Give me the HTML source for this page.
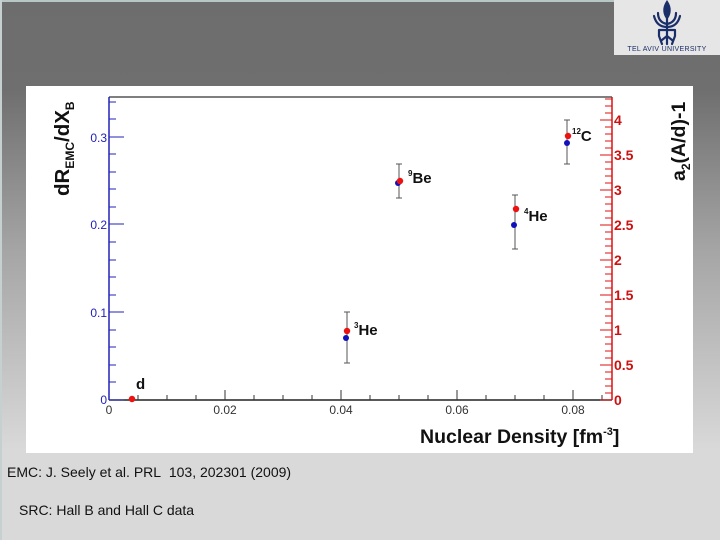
<!DOCTYPE html>
<html><head><meta charset="utf-8"><style>
html,body{margin:0;padding:0}
body{width:720px;height:540px;position:relative;overflow:hidden;background:linear-gradient(#6d6d6d 0px,#6f6f6f 90px,#a5a5a5 250px,#d9d9d9 450px,#d9d9d9 540px);font-family:"Liberation Sans",sans-serif}
.edge{position:absolute;left:0;top:0;width:720px;height:2px;background:#b9c6c6}
.edgel{position:absolute;left:0;top:0;width:2px;height:540px;background:#c6d0d0}
.logo{position:absolute;left:614px;top:0;width:106px;height:55px;background:#e6e6e6}
.plot{position:absolute;left:26px;top:86px;width:667px;height:367px;background:#fff}
.txt{position:absolute;font-size:14px;color:#111}
</style></head><body>
<div class="edge"></div><div class="edgel"></div>
<div class="logo">
<svg width="106" height="55" viewBox="0 0 106 55">
<g fill="none" stroke="#1a2e6a" stroke-width="2.2" stroke-linecap="round">
<path d="M53 2 C49 8 50 14 53 18 C56 14 57 8 53 2Z" fill="#1a2e6a"/>
<path d="M44 13 C44 20 48 23 53 24 C58 23 62 20 62 13"/>
<path d="M40 16 C42 24 47 27 53 27 C59 27 64 24 66 16"/>
<path d="M53 18 V44"/>
<path d="M45 30 H61 M45 30 V36 M61 30 V36 M45 36 L48 44 M61 36 L58 44 M53 36 L48 40 M53 36 L58 40"/>
</g>
<text x="53" y="51" text-anchor="middle" font-family="Liberation Sans" font-size="7" fill="#1a2e6a" letter-spacing="0.3">TEL AVIV UNIVERSITY</text>
</svg>
</div>
<div class="plot">
<svg width="667" height="367" viewBox="26 86 667 367" font-family="Liberation Sans">
<line x1="109" y1="97" x2="612" y2="97" stroke="#333" stroke-width="1.2"/>
<line x1="109" y1="400" x2="612" y2="400" stroke="#222" stroke-width="1.5"/>
<line x1="109" y1="97" x2="109" y2="400" stroke="#2222bb" stroke-width="1.5"/>
<line x1="612" y1="97" x2="612" y2="400" stroke="#dd1111" stroke-width="1.5"/>
<g stroke="#2222bb" stroke-width="1">
<path d="M109 400H124M109 312H124M109 224H124M109 137H124"/>
<path d="M109 382H116M109 365H116M109 347H116M109 330H116M109 295H116M109 277H116M109 260H116M109 242H116M109 207H116M109 189H116M109 172H116M109 154H116M109 119H116M109 102H116"/>
</g>
<g fill="#2222bb" font-size="12" text-anchor="end">
<text x="107" y="404">0</text><text x="107" y="317">0.1</text><text x="107" y="229">0.2</text><text x="107" y="142">0.3</text>
</g>
<g stroke="#333" stroke-width="1">
<path d="M225 400V390M341 400V390M457 400V390M573 400V390"/>
<path d="M138 400V395M167 400V395M196 400V395M254 400V395M283 400V395M312 400V395M370 400V395M399 400V395M428 400V395M486 400V395M515 400V395M544 400V395M602 400V395"/>
</g>
<g fill="#333" font-size="12" text-anchor="middle">
<text x="109" y="414">0</text><text x="225" y="414">0.02</text><text x="341" y="414">0.04</text><text x="457" y="414">0.06</text><text x="573" y="414">0.08</text>
</g>
<g stroke="#dd1111" stroke-width="1">
<path d="M612 400H600M612 365H600M612 330H600M612 295H600M612 260H600M612 225H600M612 190H600M612 155H600M612 120H600"/>
<path d="M612 393H605M612 386H605M612 379H605M612 372H605M612 358H605M612 351H605M612 344H605M612 337H605M612 323H605M612 316H605M612 309H605M612 302H605M612 288H605M612 281H605M612 274H605M612 267H605M612 253H605M612 246H605M612 239H605M612 232H605M612 218H605M612 211H605M612 204H605M612 197H605M612 183H605M612 176H605M612 169H605M612 162H605M612 148H605M612 141H605M612 134H605M612 127H605M612 113H605M612 106H605M612 99H605"/>
</g>
<g fill="#cc1111" font-size="14" font-weight="bold">
<text x="614" y="405">0</text><text x="614" y="370">0.5</text><text x="614" y="335">1</text><text x="614" y="300">1.5</text><text x="614" y="265">2</text><text x="614" y="230">2.5</text><text x="614" y="195">3</text><text x="614" y="160">3.5</text><text x="614" y="125">4</text>
</g>
<g stroke="#555" stroke-width="1">
<path d="M347 312V363M344 312H350M344 363H350"/>
<path d="M399 164V198M396 164H402M396 198H402"/>
<path d="M515 195V249M512 195H518M512 249H518"/>
<path d="M567 120V164M564 120H570M564 164H570"/>
</g>
<g fill="#1111bb">
<circle cx="346" cy="338" r="3"/><circle cx="398" cy="183" r="3"/><circle cx="514" cy="225" r="3"/><circle cx="567" cy="143" r="3"/>
</g>
<g fill="#ee1111">
<circle cx="132" cy="399" r="3.2"/><circle cx="347" cy="331" r="3.2"/><circle cx="400" cy="181" r="3.2"/><circle cx="516" cy="209" r="3.2"/><circle cx="568" cy="136" r="3.2"/>
</g>
<g fill="#111" font-weight="bold" font-size="15">
<text x="136" y="389">d</text>
<text x="354" y="335"><tspan font-size="8" dy="-7">3</tspan><tspan dy="7">He</tspan></text>
<text x="408" y="183"><tspan font-size="8" dy="-7">9</tspan><tspan dy="7">Be</tspan></text>
<text x="524" y="221"><tspan font-size="8" dy="-7">4</tspan><tspan dy="7">He</tspan></text>
<text x="572" y="141"><tspan font-size="8" dy="-7">12</tspan><tspan dy="7">C</tspan></text>
</g>
<text x="420" y="443" font-size="19.5" font-weight="bold" fill="#111">Nuclear Density [fm<tspan font-size="11" dy="-8">-3</tspan><tspan dy="8">]</tspan></text>
<text transform="translate(69,196) rotate(-90)" font-size="20.5" font-weight="bold" fill="#111">dR<tspan font-size="12" dy="5">EMC</tspan><tspan dy="-5">/dX</tspan><tspan font-size="12" dy="5">B</tspan></text>
<text transform="translate(685,181) rotate(-90)" font-size="19.5" font-weight="bold" fill="#111">a<tspan font-size="12" dy="5">2</tspan><tspan dy="-5">(A/d)-1</tspan></text>
</svg>
</div>
<div class="txt" style="left:7px;top:464px">EMC: J. Seely et al. PRL&nbsp; 103, 202301 (2009)</div>
<div class="txt" style="left:19px;top:502px">SRC: Hall B and Hall C data</div>
</body></html>
